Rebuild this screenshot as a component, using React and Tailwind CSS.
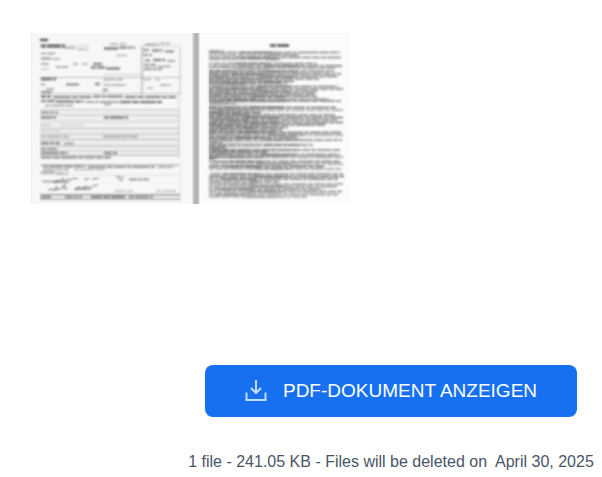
import React from 'react';

// [x, y, width, thickness, opacity]
const FORM_TEXT = [
    [9, 7, 8, 2.2, 0.75],
    [10, 13, 24, 3, 0.6], [34, 15, 10, 1.3, 0.4], [46, 16.5, 11, 1.3, 0.3],
    [79, 11, 8, 1.4, 0.35], [89, 11, 7, 1.4, 0.35],
    [73, 15.5, 14, 2.2, 0.55], [88, 14.5, 16, 1.8, 0.5], [85, 22.5, 12, 1.4, 0.3],
    [10, 20.5, 14, 1.6, 0.4], [10, 25.5, 10, 1.8, 0.45], [21, 26, 8, 1.6, 0.3],
    [10, 31, 8, 1.6, 0.35], [25, 34, 12, 1.7, 0.4], [42, 31, 5, 1.5, 0.35], [51, 31, 6, 1.5, 0.3],
    [62, 31, 9, 2.2, 0.5], [60, 34.5, 14, 2.2, 0.55], [75, 35.5, 14, 2.2, 0.5],
    [10, 36, 8, 1.2, 0.25],
    [114, 11.5, 14, 1.4, 0.4], [129, 10.5, 10, 1.4, 0.35],
    [112, 17, 6, 1.6, 0.55], [121, 17.5, 11, 1.8, 0.5], [134, 18.5, 9, 1.8, 0.5],
    [112, 22, 9, 1.8, 0.45], [114, 27.5, 5, 1.8, 0.5], [122, 27, 12, 2.2, 0.55], [136, 28, 8, 1.6, 0.4],
    [113, 32, 12, 1.8, 0.45], [127, 33.5, 13, 1.6, 0.35], [113, 36, 18, 1.8, 0.45],
    [112, 46.5, 8, 1.4, 0.3], [124, 46.5, 6, 1.4, 0.3], [116, 55, 6, 1.4, 0.3], [129, 52, 11, 1.5, 0.35],
    [10, 46, 15, 2.6, 0.6], [10, 51.5, 4, 1.6, 0.4], [35, 51.5, 13, 1.8, 0.5], [64, 51, 5, 2.2, 0.5],
    [73, 46.5, 20, 1.3, 0.35], [74, 52, 22, 1.4, 0.35], [72, 57, 5, 2, 0.45],
    [15, 56, 8, 1.6, 0.35], [10, 59, 12, 1.8, 0.45],
    [10, 63.5, 10, 2.2, 0.65], [22, 64, 39, 2, 0.55], [62, 63.5, 30, 1.8, 0.5], [94, 64, 51, 2, 0.55],
    [10, 68, 14, 2, 0.55], [25, 68.5, 28, 2, 0.55], [55, 69, 33, 1.7, 0.45], [89, 69, 42, 2, 0.6],
    [14, 72.5, 28, 1.4, 0.4], [73, 71.5, 7, 1.4, 0.4],
    [10, 79.5, 17, 1.8, 0.4], [10, 84.5, 15, 1.8, 0.5], [73, 84.5, 24, 2, 0.55],
    [10, 92, 9, 1.2, 0.25], [30, 92, 22, 1.2, 0.22],
    [10, 98, 20, 1.2, 0.2], [10, 103.5, 28, 1.5, 0.35], [72, 103.5, 35, 1.6, 0.4],
    [10, 110, 19, 2.2, 0.55], [33, 110.5, 10, 1.6, 0.4],
    [10, 116, 16, 1.8, 0.4], [10, 120, 27, 2, 0.5], [73, 120, 14, 2, 0.5],
    [10, 124.5, 70, 1.8, 0.45],
    [12, 133.5, 42, 1.6, 0.5], [57, 134, 67, 1.7, 0.5], [127, 134, 16, 1.6, 0.4],
    [12, 136.5, 26, 1.6, 0.4], [43, 136.5, 32, 1.3, 0.3],
    [10, 139.5, 14, 1.8, 0.4], [25, 140.5, 12, 1.6, 0.4],
    [11, 148.5, 15, 1.6, 0.4], [85, 144, 8, 1.5, 0.4], [88, 147, 4, 1.5, 0.4], [98, 146.5, 20, 1.8, 0.4],
    [84, 158, 18, 1.4, 0.25], [125, 158, 20, 1.4, 0.25],
    [10, 164, 10, 2.2, 0.5], [34, 164, 17, 2.2, 0.5], [60, 164, 34, 2.2, 0.6], [98, 164, 24, 2, 0.5],
];

// [x1, y1, x2, y2, opacity]
const FORM_RULES = [
    [9, 13, 58, 13, 0.3], [9, 44.5, 149, 44.5, 0.35], [73, 41.5, 112, 41.5, 0.25], [9, 60.5, 149, 60.5, 0.35],
    [111, 13, 149, 13, 0.25], [111, 13, 111, 61, 0.55], [149, 14, 149, 62, 0.35], [73, 44, 73, 60, 0.2],
    [9, 76.5, 148, 76.5, 0.25], [9, 82, 148, 82, 0.3], [9, 88.5, 148, 88.5, 0.2],
    [9, 95.5, 148, 95.5, 0.35], [9, 101, 148, 101, 0.35], [9, 106.5, 148, 106.5, 0.4],
    [9, 113, 148, 113, 0.4], [9, 118, 148, 118, 0.3], [9, 122.5, 148, 122.5, 0.4],
    [9, 132, 148, 132, 0.6], [9, 142, 148, 142, 0.15], [9, 161.5, 149, 161.5, 0.65],
    [9, 166.5, 149, 166.5, 0.4], [148, 62, 148, 125, 0.2], [149, 132, 149, 168, 0.15],
];

// [y, right end, opacity]
const TERMS = [
    [18, 192, 0.45], [19.5, 309, 0.5], [22, 268, 0.45], [24.5, 311, 0.5], [26.5, 250, 0.35],
    [30.5, 286, 0.48], [33, 311, 0.62], [35.5, 304, 0.38], [38.5, 303, 0.52],
    [41, 310, 0.58], [43.5, 306, 0.52], [46, 288, 0.5], [48.5, 263, 0.52],
    [50.5, 256, 0.48], [53.5, 307, 0.5], [56, 312, 0.58], [58.5, 287, 0.52],
    [61, 284, 0.52], [63.5, 286, 0.55], [66, 298, 0.48], [68, 311, 0.5], [70.5, 205, 0.4],
    [74.5, 306, 0.58], [77, 312, 0.45], [79.5, 230, 0.62], [82, 304, 0.58],
    [84.5, 312, 0.58], [87, 306, 0.58], [89.5, 312, 0.56], [92, 294, 0.55],
    [94.5, 257, 0.6], [97, 251, 0.52], [99.5, 310, 0.58], [102, 312, 0.48],
    [104.5, 267, 0.6], [107, 311, 0.56], [109.5, 191, 0.5], [112, 282, 0.56],
    [114.5, 195, 0.54], [117, 309, 0.5], [119, 236, 0.55], [121.5, 309, 0.52],
    [124, 312, 0.5], [126, 185, 0.5], [128.5, 310, 0.58], [131, 312, 0.48],
    [133.5, 293, 0.65], [136, 310, 0.48], [141, 312, 0.56], [143.5, 313, 0.58],
    [146, 307, 0.62], [148.5, 248, 0.5], [151, 312, 0.42], [153.5, 306, 0.48],
    [156, 291, 0.58], [158.5, 312, 0.5], [161.5, 307, 0.48], [164, 276, 0.34],
];

const DASHES = ['11 1 7 1 16 1 5 1', '5 1 14 1 9 1 8 1', '18 1 6 1 12 1 4 1', '8 1 4 1 20 1 10 1'];

const DocumentPreview = () => {
    return (
        <svg viewBox="0 0 322 171" className="block w-full" role="img" aria-label="Document preview">
            <defs>
                <filter id="soft" x="-5%" y="-5%" width="110%" height="110%">
                    <feGaussianBlur stdDeviation="1.1 0.9" />
                </filter>
                <filter id="edge" x="-5%" y="-5%" width="110%" height="110%">
                    <feGaussianBlur stdDeviation="0.8" />
                </filter>
                <linearGradient id="spine">
                    <stop offset="0" stopColor="#ececec" />
                    <stop offset="0.35" stopColor="#b4b4b4" />
                    <stop offset="0.7" stopColor="#b4b4b4" />
                    <stop offset="1" stopColor="#f4f4f4" />
                </linearGradient>
                <linearGradient id="shade">
                    <stop offset="0" stopColor="#777" stopOpacity="0.3" />
                    <stop offset="0.5" stopColor="#777" stopOpacity="0.12" />
                    <stop offset="1" stopColor="#777" stopOpacity="0" />
                </linearGradient>
            </defs>

            {/* Pages */}
            <rect width="163" height="171" fill="#f7f7f7" />
            <rect x="168" width="151" height="171" fill="#fbfbfb" />
            <rect x="161" width="8" height="171" fill="url(#spine)" />
            <path d="M0 0v171" stroke="#eee" strokeWidth="2" />

            {/* Form */}
            <rect x="9" y="76" width="140" height="47" fill="#777" opacity="0.06" />
            <rect x="9" y="161" width="140" height="6" fill="#777" opacity="0.14" />
            <g filter="url(#edge)">
                {FORM_RULES.map(([x1, y1, x2, y2, opacity], i) => (
                    <path key={i} d={`M${x1} ${y1}L${x2} ${y2}`} stroke="#555" opacity={opacity} />
                ))}
            </g>
            <g filter="url(#soft)">
                {FORM_TEXT.map(([x, y, w, h, opacity], i) => (
                    <path
                        key={i}
                        d={`M${x} ${y}h${w}`}
                        stroke="#111"
                        strokeWidth={h}
                        strokeDasharray={DASHES[i % 4]}
                        opacity={opacity}
                    />
                ))}
            </g>
            {/* Signature */}
            <g filter="url(#edge)" fill="none" stroke="#333" opacity="0.65">
                <path d="M24 150l3-3 3 1 2-3 1 4 4-3 3 1 3-2 4 1M53 147l5-2M61 146l7-1" />
                <path d="M17 157l5-1 1 2 3-5-1 4 6-2 3-4-1 5 4-1M43 157l4-3-2 3 4-3 2 2 3-3-1 3 4-3 2 3 3-3 5-1" />
                <path d="M22 149h16M45 156h14" strokeWidth="2" opacity="0.6" />
            </g>

            {/* Terms */}
            <rect x="178" y="37" width="88" height="89" fill="url(#shade)" />
            <g filter="url(#soft)" fill="none" stroke="#111">
                <path d="M239 12.5h19" strokeWidth="2.7" strokeDasharray="6 1 13 1" opacity="0.75" />
                {TERMS.map(([y, end, opacity], i) => (
                    <path
                        key={y}
                        d={`M178 ${y}H${end}`}
                        strokeWidth="1.6"
                        strokeDasharray={DASHES[(i * 3) % 4]}
                        strokeDashoffset={(i * 17) % 43}
                        opacity={opacity}
                    />
                ))}
                {TERMS.map(([y, end], i) => (
                    <path
                        key={y}
                        d={`M${180 + ((i * 29) % 60)} ${y}h${Math.min(35, end - 240)}`}
                        strokeWidth="1.8"
                        opacity={end > 245 ? 0.22 : 0}
                    />
                ))}
            </g>
        </svg>
    );
};

const DownloadIcon = () => {
    return (
        <svg viewBox="0 0 22 22" className="h-[22px] w-[22px]" fill="none" stroke="#c4dcff" aria-hidden="true">
            <path d="M11 0V13" strokeWidth="2" />
            <path d="M6 8l5 5 5-5" strokeWidth="2.2" />
            <path d="M1.5 12.5V20h19v-7.5" strokeWidth="2" />
        </svg>
    );
};

const App = () => {
    return (
        <main className="bg-white font-['Liberation_Sans',Arial,sans-serif]">
            <div className="px-[31px] pt-[33px]">
                <div className="max-w-[322px]">
                    <DocumentPreview />
                </div>
            </div>

            {/* Download */}
            <div className="mt-[161px] flex flex-col items-center gap-[33px] pl-[180px]">
                <button
                    type="button"
                    className="flex items-center gap-4 rounded-lg bg-[#1670ef] px-10 py-3 text-[19px] leading-7 text-white"
                >
                    <DownloadIcon />
                    PDF-DOKUMENT ANZEIGEN
                </button>
                <p className="whitespace-pre text-base text-[#4a5568]">
                    1 file - 241.05 KB - Files will be deleted on  April 30, 2025
                </p>
            </div>
        </main>
    );
};

export default App;
